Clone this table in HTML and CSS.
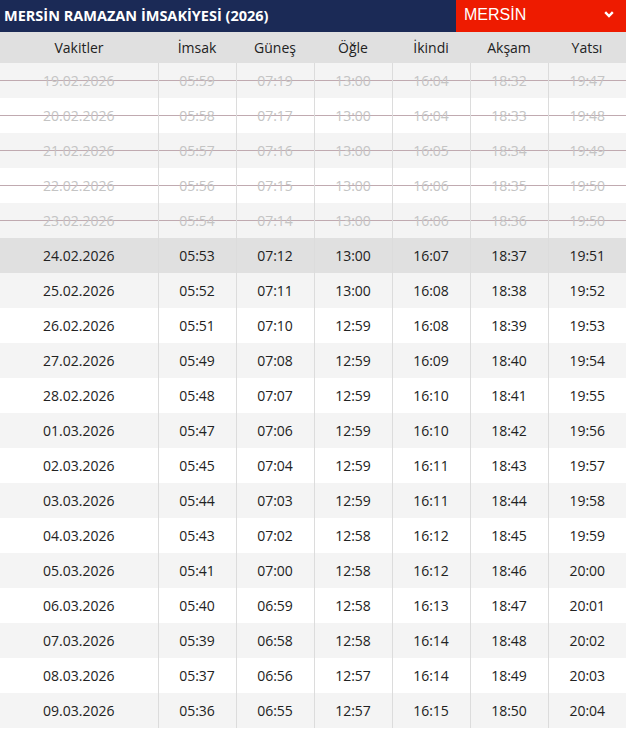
FILE: index.html
```html
<!DOCTYPE html>
<html lang="tr">
<head>
<meta charset="utf-8">
<link rel="stylesheet" href="styles.css">
</head>
<body>
<div class="topbar">
  <div class="title">MERSİN RAMAZAN İMSAKİYESİ (2026)</div>
  <div class="city">
    <span>MERSİN</span>
    <svg class="chev" width="10" height="7" viewBox="0 0 10 7"><path d="M1.2 1.2 L5 5 L8.8 1.2" fill="none" stroke="#fff" stroke-width="2.4"/></svg>
  </div>
</div>
<table class="tbl">
  <colgroup><col class="c0"><col class="c"><col class="c"><col class="c"><col class="c"><col class="c"><col class="c"></colgroup>
  <thead>
    <tr><th>Vakitler</th><th>İmsak</th><th>Güneş</th><th>Öğle</th><th>İkindi</th><th>Akşam</th><th>Yatsı</th></tr>
  </thead>
  <tbody>
    <tr class="past"><td>19.02.2026</td><td>05:59</td><td>07:19</td><td>13:00</td><td>16:04</td><td>18:32</td><td>19:47</td></tr>
    <tr class="past"><td>20.02.2026</td><td>05:58</td><td>07:17</td><td>13:00</td><td>16:04</td><td>18:33</td><td>19:48</td></tr>
    <tr class="past"><td>21.02.2026</td><td>05:57</td><td>07:16</td><td>13:00</td><td>16:05</td><td>18:34</td><td>19:49</td></tr>
    <tr class="past"><td>22.02.2026</td><td>05:56</td><td>07:15</td><td>13:00</td><td>16:06</td><td>18:35</td><td>19:50</td></tr>
    <tr class="past"><td>23.02.2026</td><td>05:54</td><td>07:14</td><td>13:00</td><td>16:06</td><td>18:36</td><td>19:50</td></tr>
    <tr class="today"><td>24.02.2026</td><td>05:53</td><td>07:12</td><td>13:00</td><td>16:07</td><td>18:37</td><td>19:51</td></tr>
    <tr><td>25.02.2026</td><td>05:52</td><td>07:11</td><td>13:00</td><td>16:08</td><td>18:38</td><td>19:52</td></tr>
    <tr><td>26.02.2026</td><td>05:51</td><td>07:10</td><td>12:59</td><td>16:08</td><td>18:39</td><td>19:53</td></tr>
    <tr><td>27.02.2026</td><td>05:49</td><td>07:08</td><td>12:59</td><td>16:09</td><td>18:40</td><td>19:54</td></tr>
    <tr><td>28.02.2026</td><td>05:48</td><td>07:07</td><td>12:59</td><td>16:10</td><td>18:41</td><td>19:55</td></tr>
    <tr><td>01.03.2026</td><td>05:47</td><td>07:06</td><td>12:59</td><td>16:10</td><td>18:42</td><td>19:56</td></tr>
    <tr><td>02.03.2026</td><td>05:45</td><td>07:04</td><td>12:59</td><td>16:11</td><td>18:43</td><td>19:57</td></tr>
    <tr><td>03.03.2026</td><td>05:44</td><td>07:03</td><td>12:59</td><td>16:11</td><td>18:44</td><td>19:58</td></tr>
    <tr><td>04.03.2026</td><td>05:43</td><td>07:02</td><td>12:58</td><td>16:12</td><td>18:45</td><td>19:59</td></tr>
    <tr><td>05.03.2026</td><td>05:41</td><td>07:00</td><td>12:58</td><td>16:12</td><td>18:46</td><td>20:00</td></tr>
    <tr><td>06.03.2026</td><td>05:40</td><td>06:59</td><td>12:58</td><td>16:13</td><td>18:47</td><td>20:01</td></tr>
    <tr><td>07.03.2026</td><td>05:39</td><td>06:58</td><td>12:58</td><td>16:14</td><td>18:48</td><td>20:02</td></tr>
    <tr><td>08.03.2026</td><td>05:37</td><td>06:56</td><td>12:57</td><td>16:14</td><td>18:49</td><td>20:03</td></tr>
    <tr><td>09.03.2026</td><td>05:36</td><td>06:55</td><td>12:57</td><td>16:15</td><td>18:50</td><td>20:04</td></tr>
  </tbody>
</table>
</body>
</html>
```
FILE: styles.css
```css
html, body {
  margin: 0;
  padding: 0;
  background: #fff;
  font-family: "Open Sans", "Noto Sans", sans-serif;
}
.topbar {
  display: flex;
  height: 32px;
  background: #1b2a56;
}
.title {
  flex: 1;
  color: #fff;
  font-weight: 700;
  font-size: 14.5px;
  line-height: 32px;
  padding-left: 4px;
}
.city {
  width: 170px;
  background: #ee1b00;
  display: flex;
  align-items: center;
  justify-content: space-between;
  padding: 0 12px 0 8px;
  box-sizing: border-box;
  color: #fff;
  font-family: "Liberation Sans", Arial, sans-serif;
  font-size: 16px;
}
.city span { position: relative; top: -1px; }
.chev { position: relative; top: -2px; }
.tbl {
  width: 626px;
  border-collapse: collapse;
  table-layout: fixed;
  font-size: 14px;
}
.c0 { width: 158px; }
.c { width: 78px; }
.tbl th {
  background: #e0e0e0;
  font-weight: 400;
  color: #222;
  height: 31px;
  padding: 0;
  text-align: center;
  vertical-align: middle;
}
.tbl td {
  height: 35px;
  padding: 0;
  text-align: center;
  vertical-align: middle;
  color: #222;
  border-left: 1px solid #dcdcdc;
}
.tbl td:first-child { border-left: none; }
.tbl tbody tr:nth-child(odd) td { background-color: #f4f4f4; }
.tbl tbody tr:nth-child(even) td { background-color: #fff; }
.tbl tbody tr.past td {
  color: #c4c4c4;
  background-image: linear-gradient(to bottom, transparent 17px, #c0aab0 17px, #c0aab0 18px, transparent 18px);
}
.tbl tbody tr.today td { background-color: #e0e0e0; }
```
